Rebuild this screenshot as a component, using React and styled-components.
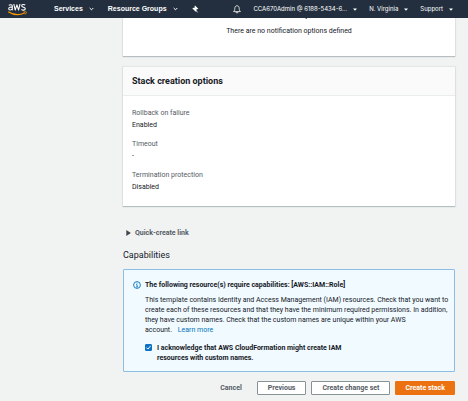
import React, { useState } from 'react';
import styled, { createGlobalStyle, css } from 'styled-components';

const GlobalStyle = createGlobalStyle`
  *, *::before, *::after { box-sizing: border-box; }
  body {
    margin: 0;
    background: #f1f3f3;
    color: #16191f;
    font: 7px/10px Roboto, "Noto Sans", sans-serif;
  }
  button { font: inherit; cursor: pointer; }
  h2, h3, p, dl, dd { margin: 0; }
`;

const TopBar = styled.header`
  position: sticky;
  top: 0;
  z-index: 1;
  display: flex;
  align-items: center;
  justify-content: space-between;
  height: 18px;
  padding: 0 15px 0 7px;
  background: #232f3e;
  color: #fff;
`;

const NavGroup = styled.nav`
  display: flex;
  align-items: center;
  gap: ${({ $gap }) => $gap}px;
`;

const HomeLink = styled.a`
  display: flex;
  margin-right: 12px;
`;

const NavButton = styled.button`
  display: flex;
  align-items: center;
  gap: 6px;
  padding: 0;
  border: 0;
  background: none;
  color: #fff;
  white-space: nowrap;
  ${({ $primary }) =>
    $primary
      ? css`
          && { font: 700 7px/10px "Liberation Sans", Arial, sans-serif; }
        `
      : css`
          && { font: 400 6px/10px Inter, "Liberation Sans", sans-serif; }
        `}
`;

const Content = styled.main`
  display: flex;
  flex-direction: column;
  padding: 0 13px 6px 123px;
`;

const Panel = styled.section`
  background: #fff;
  box-shadow: 0 1px 1px rgba(0, 28, 36, 0.2), 0 0 1px 1px rgba(0, 28, 36, 0.05);
`;

const NotificationPanel = styled(Panel)`
  margin-top: -8px;
  padding-bottom: 20px;
  text-align: center;
`;

const EmptyTitle = styled.h3`
  margin-bottom: 6px;
  font-size: 7px;
  line-height: 10px;
`;

const OptionsPanel = styled(Panel)`
  margin-top: 11px;
`;

const PanelHeader = styled.div`
  padding: 8px 9px;
  border-bottom: 1px solid #eaeded;
  background: #fafafa;
`;

const PanelTitle = styled.h2`
  font-size: 9px;
  line-height: 12px;
`;

const OptionList = styled.dl`
  display: flex;
  flex-direction: column;
  gap: 9px;
  padding: 12px 9px 14px;
`;

const OptionName = styled.dt`
  margin-bottom: 2px;
  color: #545b64;
`;

const Expander = styled.button`
  display: flex;
  align-items: center;
  align-self: flex-start;
  gap: 4px;
  margin: 22px 0 0 3px;
  padding: 0;
  border: 0;
  background: none;
  color: #545b64;
  && { font-weight: 700; }
`;

const SectionTitle = styled.h2`
  margin: 11px 0 8px;
  font-size: 9px;
  line-height: 12px;
  font-weight: 400;
`;

const Alert = styled.section`
  display: grid;
  grid-template-columns: 8px 1fr;
  column-gap: 4px;
  padding: 10px 3px 8px 9px;
  border: 1px solid #8cbde6;
  border-radius: 1px;
  background: #f1faff;
`;

const AlertTitle = styled.h3`
  margin-bottom: 5px;
  font-size: 7px;
  line-height: 10px;
`;

const NoBreak = styled.span`
  white-space: nowrap;
`;

const TextLink = styled.a`
  margin-left: 4px;
  color: #0073bb;
  text-decoration: none;
`;

const Acknowledge = styled.label`
  display: flex;
  align-items: flex-start;
  gap: 5px;
  max-width: 212px;
  margin-top: 8px;
  font-weight: 700;
`;

const Checkbox = styled.input`
  flex: none;
  appearance: none;
  width: 7px;
  height: 7px;
  margin: 1px 0 0;
  border: 1px solid #687078;
  border-radius: 1px;
  background: #fff;
  &:checked {
    border-color: #0b72c4;
    background: #0b72c4;
  }
`;

const CheckCell = styled.span`
  display: grid;
  flex: none;
  > * { grid-area: 1 / 1; }
  > svg { margin-top: 1px; pointer-events: none; }
`;

const Actions = styled.div`
  display: flex;
  justify-content: flex-end;
  gap: 5px;
  margin-top: 9px;
`;

const variants = {
  link: css`
    padding: 1px 9px;
    border-color: transparent;
    background: none;
    color: #545b64;
  `,
  normal: css`
    padding: 1px 10px;
    border-color: #879196;
    background: #fff;
    color: #545b64;
  `,
  primary: css`
    padding: 1px 9px;
    border-color: #ec7211;
    background: #ec7211;
    color: #fff;
  `,
};

const Button = styled.button`
  border: 1px solid;
  border-radius: 1px;
  && { font-weight: 700; }
  white-space: nowrap;
  ${({ $variant }) => variants[$variant]}
`;

const AwsLogo = () => (
  <svg width="21" height="14" viewBox="0 0 21 14" fill="none">
    <g stroke="#fff" strokeWidth="1.1" strokeLinejoin="round">
      <path d="M1.8 3.3C2.6 2.6 5.3 2.2 5.3 4V8.2M5.3 5.3C3.6 4.9 1.7 5.2 1.7 6.7C1.7 8.4 4.4 8.3 5.3 6.8" />
      <path d="M6.8 2L8.2 8L9.9 2.8L11.6 8L13 2" />
      <path d="M18.2 2.9C17 2.2 14.7 2.3 14.7 3.8C14.7 5.7 18.3 4.9 18.3 6.8C18.3 8.5 15.7 8.4 14.4 7.5" />
    </g>
    <path d="M1.2 9.8C6.5 13.2 13 13.3 18 10.7" stroke="#f90" strokeWidth="1.2" />
    <path d="M16.4 10C18 9.6 19.1 9.6 19.3 9.9C19.5 10.4 19 11.7 18.3 12.5" stroke="#f90" strokeWidth=".8" />
  </svg>
);

const Chevron = () => (
  <svg width="5" height="4" viewBox="0 0 5 4" fill="none">
    <path d="M.7 1L2.5 2.8L4.3 1" stroke="#fff" />
  </svg>
);

const Caret = () => (
  <svg width="4" height="3" viewBox="0 0 4 3">
    <path d="M0 .5H4L2 2.7Z" fill="#fff" />
  </svg>
);

const PinIcon = () => (
  <svg width="7" height="8" viewBox="0 0 7 8">
    <path d="M3 .6L6.3 3.7L5.7 4.3L5 4.1L4.3 4.9L4.4 6.3L3.8 6.8L.4 3.5L1 2.8L2.2 2.9L2.8 2L2.5 1.2Z" fill="#fff" />
    <path d="M3.6 5L5.6 7.4" stroke="#fff" strokeWidth=".8" />
  </svg>
);

const BellIcon = () => (
  <svg width="8" height="9" viewBox="0 0 8 9" fill="none" stroke="#fff" strokeWidth=".8">
    <path d="M4 .7C2.5 .9 1.8 2 1.8 3.3C1.8 5 1.4 5.6 .6 6.6H7.4C6.6 5.6 6.2 5 6.2 3.3C6.2 2 5.5 .9 4 .7ZM3 7C3.1 8.4 4.9 8.4 5 7" />
  </svg>
);

const InfoIcon = () => (
  <svg width="8" height="10" viewBox="0 -1 8 10" fill="none" stroke="#0073bb">
    <circle cx="4" cy="4" r="3.4" strokeWidth=".9" />
    <path d="M4 1.7V2.6M3.1 3.6H4.1V5.9M3 5.9H5.1" strokeWidth=".8" />
  </svg>
);

const Triangle = () => (
  <svg width="5" height="6" viewBox="0 0 5 6">
    <path d="M.3 .1L4.9 3L.3 5.9Z" fill="#414750" />
  </svg>
);

const CheckMark = () => (
  <svg width="7" height="7" viewBox="0 0 7 7" fill="none">
    <path d="M1.4 3.6L2.9 5.1L5.6 1.9" stroke="#fff" />
  </svg>
);

const options = [
  { name: 'Rollback on failure', value: 'Enabled' },
  { name: 'Timeout', value: '-' },
  { name: 'Termination protection', value: 'Disabled' },
];

const accountMenus = ['CCA670Admin @ 6188-5434-6...', 'N. Virginia', 'Support'];

export default function App() {
  const [acknowledged, setAcknowledged] = useState(true);

  return (
    <>
      <GlobalStyle />
      <TopBar>
        <NavGroup $gap={14} aria-label="Services">
          <HomeLink href="#" aria-label="AWS home"><AwsLogo /></HomeLink>
          <NavButton $primary>Services<Chevron /></NavButton>
          <NavButton $primary>Resource Groups<Chevron /></NavButton>
          <NavButton aria-label="Pinned shortcuts"><PinIcon /></NavButton>
        </NavGroup>
        <NavGroup $gap={12} aria-label="Account">
          <NavButton aria-label="Notifications"><BellIcon /></NavButton>
          {accountMenus.map((label) => (
            <NavButton key={label}>{label}<Caret /></NavButton>
          ))}
        </NavGroup>
      </TopBar>

      <Content>
        <NotificationPanel>
          <EmptyTitle>No notification options</EmptyTitle>
          <p>There are no notification options defined</p>
        </NotificationPanel>

        <OptionsPanel>
          <PanelHeader>
            <PanelTitle>Stack creation options</PanelTitle>
          </PanelHeader>
          <OptionList>
            {options.map(({ name, value }) => (
              <div key={name}>
                <OptionName>{name}</OptionName>
                <dd>{value}</dd>
              </div>
            ))}
          </OptionList>
        </OptionsPanel>

        <Expander aria-expanded="false"><Triangle />Quick-create link</Expander>

        <SectionTitle>Capabilities</SectionTitle>
        <Alert>
          <InfoIcon />
          <div>
            <AlertTitle>The following resource(s) require capabilities: [AWS::IAM::Role]</AlertTitle>
            <p>
              This template contains Identity and Access Management (IAM) resources. Check that you
              want to create each of these resources and that they have the minimum required
              permissions. In addition, they have custom names. Check that the custom names are
              unique within your AWS{' '}
              <NoBreak>account. <TextLink href="#">Learn more</TextLink></NoBreak>
            </p>
            <Acknowledge>
              <CheckCell>
                <Checkbox
                  type="checkbox"
                  checked={acknowledged}
                  onChange={(event) => setAcknowledged(event.target.checked)}
                />
                {acknowledged && <CheckMark />}
              </CheckCell>
              <span>I acknowledge that AWS CloudFormation might create IAM resources with custom names.</span>
            </Acknowledge>
          </div>
        </Alert>

        <Actions>
          <Button $variant="link">Cancel</Button>
          <Button $variant="normal">Previous</Button>
          <Button $variant="normal">Create change set</Button>
          <Button $variant="primary">Create stack</Button>
        </Actions>
      </Content>
    </>
  );
}
